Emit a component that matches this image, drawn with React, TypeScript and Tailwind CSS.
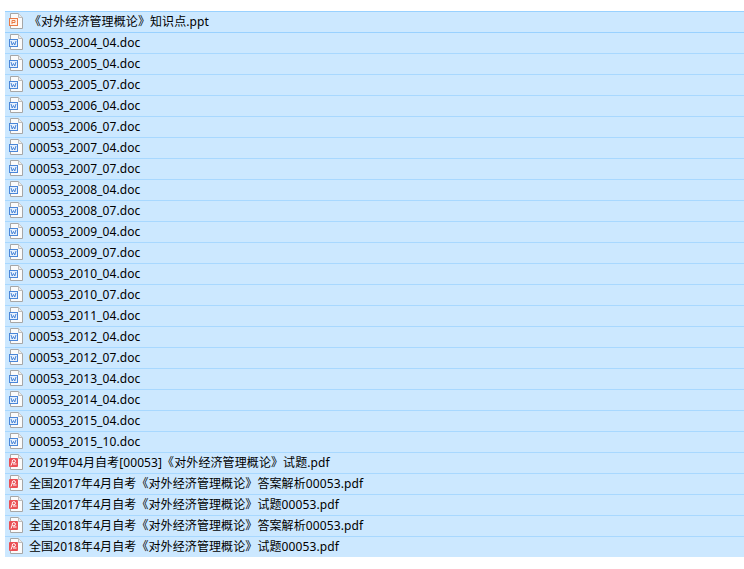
const DOC_NAMES = [
  "2004_04", "2005_04", "2005_07", "2006_04", "2006_07", "2007_04", "2007_07",
  "2008_04", "2008_07", "2009_04", "2009_07", "2010_04", "2010_07", "2011_04",
  "2012_04", "2012_07", "2013_04", "2014_04", "2015_04", "2015_10",
];

const PDF_NAMES = [
  "2019年04月自考[00053]《对外经济管理概论》试题.pdf",
  "全国2017年4月自考《对外经济管理概论》答案解析00053.pdf",
  "全国2017年4月自考《对外经济管理概论》试题00053.pdf",
  "全国2018年4月自考《对外经济管理概论》答案解析00053.pdf",
  "全国2018年4月自考《对外经济管理概论》试题00053.pdf",
];

type Kind = "ppt" | "doc" | "pdf";

// small page with folded corner, badge differs per type
function FileIcon({ kind }: { kind: Kind }) {
  return (
    <svg width="16" height="16" viewBox="0 0 16 16" className="shrink-0">
      <path d="M2.5 .5H10.5L14.5 4.5V15.5H2.5Z" fill="#fbfbfb" stroke="#a6a6a6" />
      <path d="M10.5 .5V4.5H14.5" fill="#ececec" stroke="#bdbdbd" />
      {kind === "ppt" && (
        <>
          <rect x="1.5" y="5.5" width="8" height="7" fill="#fdf1e9" stroke="#ea7a45" />
          <path d="M4 11V7.5H7V9.5H4" fill="none" stroke="#ea7a45" />
        </>
      )}
      {kind === "doc" && (
        <>
          <rect x="1.5" y="5.5" width="8" height="7" fill="#e6f0fc" stroke="#4a86d8" />
          <path d="M3 7L4.2 11L5.5 8.5L6.8 11L8 7" fill="none" stroke="#4a86d8" />
        </>
      )}
      {kind === "pdf" && (
        <>
          <rect x="1" y="4" width="9" height="9" rx="1" fill="#ea5055" />
          <circle cx="5.8" cy="7.2" r="1.6" fill="none" stroke="#ffffff" />
          <path d="M4.3 8L3 11.5" fill="none" stroke="#ffffff" />
          <path d="M5 10H8.5" fill="none" stroke="#ffffff" />
        </>
      )}
    </svg>
  );
}

function Row({ kind, name, variant }: { kind: Kind; name: string; variant?: "first" | "last" }) {
  const border =
    variant === "first"
      ? "h-[21px] border-b border-[#99d1ff]"
      : variant === "last"
        ? "h-[20px]"
        : "h-[21px] border-b border-[#a8d8ff]";
  return (
    <div className={`flex items-start gap-[5px] pt-px pl-[3px] ${border}`}>
      <FileIcon kind={kind} />
      <span className="whitespace-pre pt-px text-[12px] leading-[16px] tracking-[0.1px] text-black">{name}</span>
    </div>
  );
}

export default function App() {
  return (
    <div className="h-[569px] w-[744px] bg-white pt-[11px] pl-[5px] font-['Noto_Sans','Noto_Sans_CJK_SC',sans-serif]">
      <div className="border-t border-[#99d1ff] bg-[#cce8ff]">
        <Row kind="ppt" name="《对外经济管理概论》知识点.ppt" variant="first" />
        {DOC_NAMES.map((n) => (
          <Row key={n} kind="doc" name={`00053_${n}.doc`} />
        ))}
        {PDF_NAMES.map((n, i) => (
          <Row key={n} kind="pdf" name={n} variant={i === PDF_NAMES.length - 1 ? "last" : undefined} />
        ))}
      </div>
    </div>
  );
}
